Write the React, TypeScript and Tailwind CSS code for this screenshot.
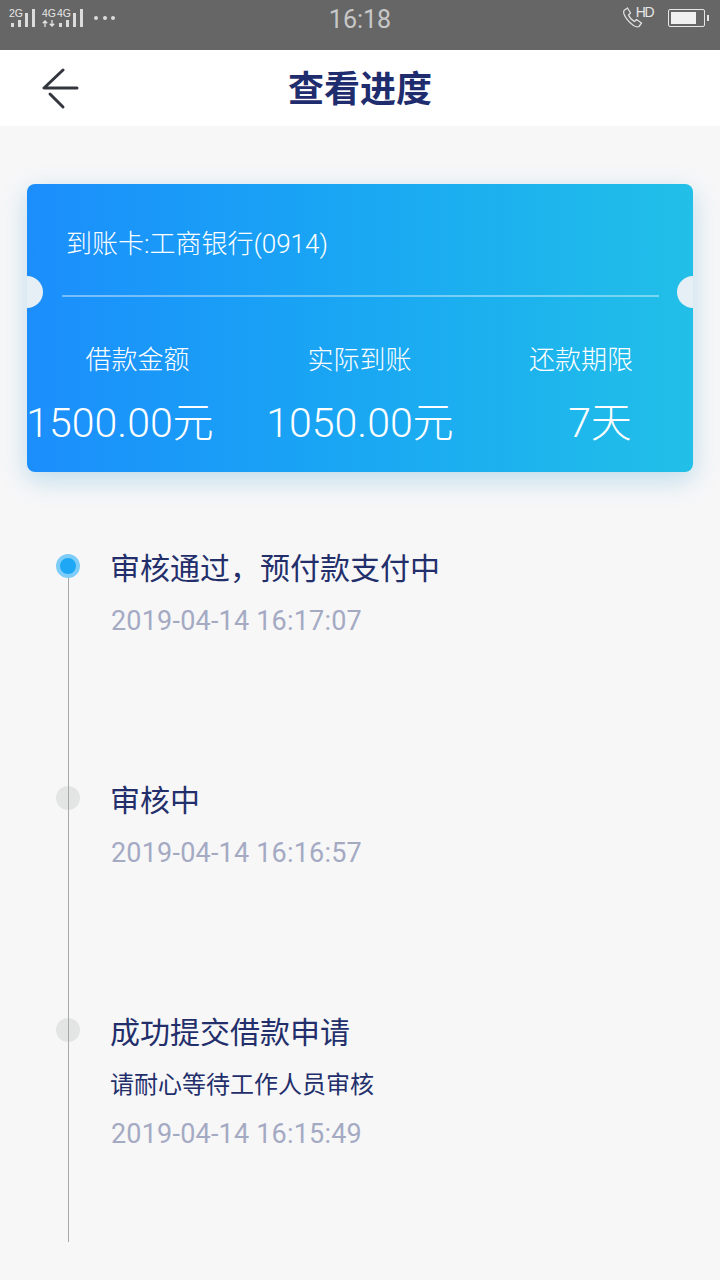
const cjk = "font-['Noto_Sans_CJK_SC','Noto_Sans',sans-serif]";

function Signal() {
  return (
    <div className="flex items-end gap-[4px]">
      <span className="h-[4px] w-[3px] bg-[#dcdcdc]" />
      <span className="h-[7px] w-[3px] bg-[#dcdcdc]" />
      <span className="h-[14px] w-[3px] bg-[#dcdcdc]" />
      <span className="h-[18px] w-[3px] bg-[#dcdcdc]" />
    </div>
  );
}

function StatusBar() {
  return (
    <div className="grid h-[50px] shrink-0 grid-cols-3 bg-[#666666] font-['Liberation_Sans',sans-serif] text-[#e6e6e6]">
      <div className="flex items-start pl-[9px] pt-[9px]">
        <div className="relative h-[18px] w-[27px]">
          <span className="absolute left-0 top-0 text-[10.500px] leading-[8px]">2G</span>
          <div className="absolute bottom-0 left-[2px]">
            <Signal />
          </div>
        </div>
        <div className="relative ml-[6px] h-[18px] w-[46px]">
          <span className="absolute left-0 top-0 text-[10.500px] leading-[8px]">4G</span>
          <span className="absolute left-[15px] top-0 text-[10.500px] leading-[8px]">4G</span>
          <svg width="14" height="7" viewBox="0 0 14 7" fill="none" stroke="#e6e6e6" strokeWidth="1.3" className="absolute bottom-0 left-0">
            <path d="M3 7V1M.8 3.200 3 1l2.200 2.200M10 0v6M7.800 3.800 10 6l2.200-2.200" />
          </svg>
          <div className="absolute bottom-0 left-[17px]">
            <Signal />
          </div>
        </div>
        <div className="ml-[6px] mt-[7px] flex gap-[4.500px]">
          <span className="size-[4px] rounded-full bg-[#dcdcdc]" />
          <span className="size-[4px] rounded-full bg-[#dcdcdc]" />
          <span className="size-[4px] rounded-full bg-[#dcdcdc]" />
        </div>
      </div>
      <div className="pt-[6px] text-center font-['Roboto',sans-serif] text-[25px] leading-[28px] text-[#c8c8c8]">16:18</div>
      <div className="flex items-start justify-end pr-[11px] pt-[7px]">
        <svg width="21" height="21" viewBox="0 0 21 21" fill="none" stroke="#e0e0e0" strokeWidth="1.3" strokeLinejoin="round">
          <path d="M1 3.500 4.500 1l3 5-2 2c1 2.500 3 5 6 6.500l2-2 5 3.500-2.500 3.500c-1.500.6-3.500.2-5.500-1C6.500 15.500 2.500 11 1 7c-.4-1.300-.4-2.500 0-3.500Z" />
        </svg>
        <span className="-ml-[8px] mr-[15px] text-[14px] leading-[11px] tracking-[-1.500px]">HD</span>
        <div className="mt-[2px] h-[18px] w-[37px] rounded-[2px] border border-[#e6e6e6] p-[2px]">
          <div className="h-full w-[25px] bg-[#f0f0f0]" />
        </div>
        <span className="ml-[2px] mt-[8px] h-[6px] w-[2px] bg-[#e6e6e6]" />
      </div>
    </div>
  );
}

function Step({
  title,
  time,
  note,
  active,
  height,
}: {
  title: string;
  time: string;
  note?: string;
  active?: boolean;
  height: string;
}) {
  return (
    <div className={`flex ${height}`}>
      <div className="w-[110px] shrink-0 pl-[56px] pt-[11px]">
        {active ? (
          <div className="size-[24px] rounded-full border-[4px] border-[#7dcdf8] bg-[#1ea7f5]" />
        ) : (
          <div className="size-[24px] rounded-full bg-[#e3e5e5]" />
        )}
      </div>
      <div>
        <div className="-mt-[1px] text-[30px] leading-[48px] text-[#232f6b]">{title}</div>
        {note && <div className="mt-[12px] text-[24px] leading-[34px] text-[#232f6b]">{note}</div>}
        <div className={`${note ? "mt-[17px]" : "mt-[14px]"} ml-[1px] font-['Roboto',sans-serif] text-[27px] leading-[34px] tracking-[0.200px] text-[#a5aac3]`}>
          {time}
        </div>
      </div>
    </div>
  );
}

export default function App() {
  return (
    <div className={`flex h-[1280px] w-[720px] flex-col overflow-hidden bg-[#f7f7f8] ${cjk}`}>
      <StatusBar />

      <div className="relative flex h-[76px] shrink-0 items-center justify-center bg-white">
        <svg width="38" height="42" viewBox="0 0 38 42" fill="none" stroke="#33363f" strokeWidth="3" strokeLinecap="round" strokeLinejoin="round" className="absolute left-[42px] top-[18px]">
          <path d="M21 2 2 20h33" />
          <path d="M8 26 21 39" />
        </svg>
        <span className="pb-[4px] text-[36px] font-bold leading-[48px] text-[#1f2d6e]">查看进度</span>
      </div>

      <div className="relative mx-[27px] mt-[58px] h-[288px] shrink-0 rounded-[8px] bg-gradient-to-r from-[#1c8efc] to-[#22bfe8] shadow-[0_8px_26px_rgba(40,150,205,0.28)]">
        <span className="absolute left-0 top-[92px] h-[32px] w-[16px] rounded-r-full bg-[#e6eff5]" />
        <span className="absolute right-0 top-[92px] h-[32px] w-[16px] rounded-l-full bg-[#e6eff5]" />
        <div className="pl-[39px] pt-[42px] font-['Roboto','Noto_Sans_CJK_SC',sans-serif] text-[26px] font-light leading-[36px] text-white">到账卡:工商银行(0914)</div>
        <div className="ml-[35px] mr-[34px] mt-[33px] h-[2px] bg-white/40" />
        <div className="mt-[44px] grid grid-cols-3 text-center text-[26px] font-light leading-[34px] text-white">
          <span className="-ml-[1px]">借款金额</span>
          <span className="-ml-[1px]">实际到账</span>
          <span className="-ml-[2px]">还款期限</span>
        </div>
        <div className="-mx-[27px] mt-[23px] grid grid-cols-3 text-center font-['Roboto','Noto_Sans_CJK_SC',sans-serif] text-[41px] font-light leading-[50px] text-white">
          <span>1500.00元</span>
          <span>1050.00元</span>
          <span>7天</span>
        </div>
      </div>

      <div className="relative mt-[71px] flex flex-col">
        <span className="absolute bottom-[3px] left-[68px] top-[35px] w-px bg-[#a8a8a8]" />
        <Step active title="审核通过，预付款支付中" time="2019-04-14 16:17:07" height="h-[232px]" />
        <Step title="审核中" time="2019-04-14 16:16:57" height="h-[232px]" />
        <Step title="成功提交借款申请" note="请耐心等待工作人员审核" time="2019-04-14 16:15:49" height="h-[238px]" />
      </div>
    </div>
  );
}
